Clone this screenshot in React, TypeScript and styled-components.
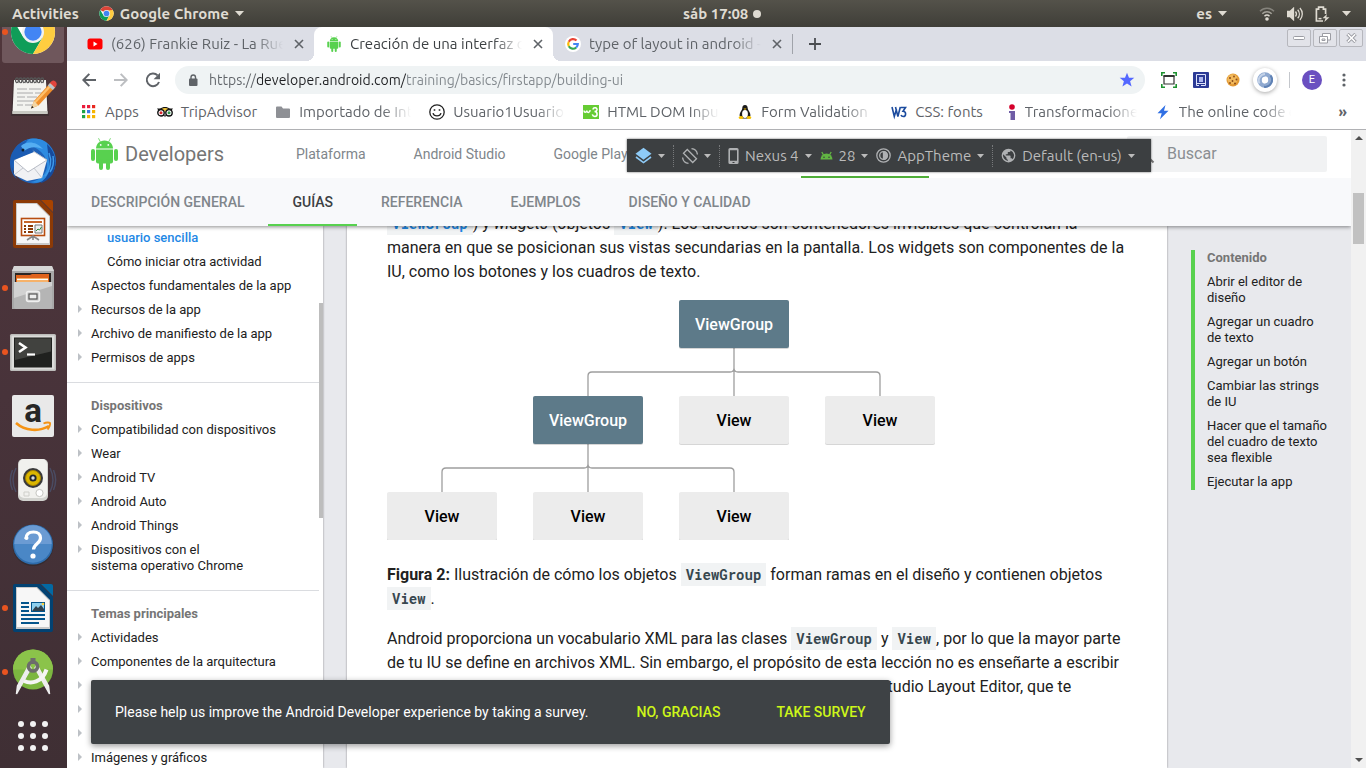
import React from "react";
import styled, { createGlobalStyle, css } from "styled-components";

const ui = `Ubuntu, "Noto Sans", "Open Sans", sans-serif`;
const body = `Roboto, "Liberation Sans", sans-serif`;
const mono = `"Roboto Mono", "DejaVu Sans Mono", monospace`;

const green = "#58d14f";

const GlobalStyle = createGlobalStyle`
  * { box-sizing: border-box; }
  html, body, #root { height: 100%; }
  body { margin: 0; overflow: hidden; font-family: ${body}; color: #212121; background: #fff; }
  a { color: inherit; text-decoration: none; }
  button { font: inherit; color: inherit; background: none; border: 0; padding: 0; cursor: pointer; }
  ul { list-style: none; margin: 0; padding: 0; }
  p { margin: 0; }
  svg { display: block; flex: none; }
`;

/* ---------- Desktop shell ---------- */

const Desktop = styled.div`
  height: 100vh;
  display: flex;
  flex-direction: column;
`;

const TopBar = styled.header`
  flex: none;
  height: 27px;
  display: flex;
  align-items: center;
  position: relative;
  z-index: 10;
  background: linear-gradient(#54524a, #3f3e38);
  color: #dfdbd2;
  font: bold 15px/20px ${ui};
`;

const TopBarStart = styled.div`
  flex: 0 0 50%;
  display: flex;
  align-items: center;
  gap: 20px;
  padding-left: 12px;
`;

const MenuButton = styled.button`
  display: flex;
  align-items: center;
  gap: 6px;
`;

const Clock = styled.button`
  display: flex;
  align-items: center;
  gap: 5px;
`;

const Tray = styled.div`
  margin-left: auto;
  display: flex;
  align-items: center;
  gap: 12px;
  padding-right: 15px;
  & > ${MenuButton}:first-child { margin-right: 20px; }
`;

const Workspace = styled.div`
  flex: 1;
  min-height: 0;
  display: flex;
`;

const Launcher = styled.nav`
  flex: 0 0 67px;
  overflow: hidden;
  background: linear-gradient(#50363b, #48333a 50%, #3f2f34);
`;

const LauncherList = styled.ul`
  margin-top: -27px;
`;

const LauncherItem = styled.li`
  height: 64px;
  padding: 1px 2px;
`;

const LauncherButton = styled.button<{ $open?: boolean; $focus?: boolean }>`
  position: relative;
  width: 62px;
  height: 62px;
  display: flex;
  align-items: center;
  justify-content: center;
  border-radius: 3px;
  ${(p) => p.$focus && css`background: #6f575c;`}
  ${(p) =>
    p.$open &&
    css`
      &::before {
        content: "";
        position: absolute;
        left: 0;
        top: 28px;
        width: 6px;
        height: 6px;
        border-radius: 50%;
        background: #e95420;
      }
    `}
`;

const Browser = styled.div`
  flex: 1;
  min-width: 0;
  display: flex;
  flex-direction: column;
`;

/* ---------- Browser chrome ---------- */

const TabStrip = styled.div`
  flex: none;
  height: 34px;
  display: flex;
  align-items: center;
  padding-left: 8px;
  background: #dcdee6;
  color: #5f6368;
  font: 15px/20px ${ui};
`;

const Tab = styled.div<{ $active?: boolean }>`
  flex: 0 1 239px;
  min-width: 0;
  height: 34px;
  display: flex;
  align-items: center;
  gap: 8px;
  padding: 0 7px 0 12px;
  position: relative;
  ${(p) =>
    p.$active &&
    css`
      background: #fff;
      color: #3c4043;
      border-radius: 8px 8px 0 0;
      &::before,
      &::after {
        content: "";
        position: absolute;
        bottom: 0;
        width: 8px;
        height: 8px;
      }
      &::before {
        left: -8px;
        background: radial-gradient(circle at 0 0, transparent 8px, #fff 8px);
      }
      &::after {
        right: -8px;
        background: radial-gradient(circle at 100% 0, transparent 8px, #fff 8px);
      }
    `}
`;

const fade = css`
  overflow: hidden;
  white-space: nowrap;
  mask-image: linear-gradient(to right, #000 calc(100% - 28px), transparent);
`;

const TabTitle = styled.button`
  flex: 1;
  min-width: 0;
  text-align: left;
  ${fade}
`;

const IconButton = styled.button<{ $size?: number }>`
  flex: none;
  width: ${(p) => p.$size ?? 32}px;
  height: ${(p) => p.$size ?? 32}px;
  display: flex;
  align-items: center;
  justify-content: center;
`;

const StripDivider = styled.span`
  width: 1px;
  height: 20px;
  margin-right: 6px;
  background: #a0a3aa;
`;

const WindowButtons = styled.div`
  margin: 0 3px 12px auto;
  display: flex;
  gap: 2px;
`;

const WindowButton = styled.button`
  width: 24px;
  height: 18px;
  display: flex;
  align-items: center;
  justify-content: center;
  border: 1px solid #b6b7bd;
  border-radius: 2px;
  background: #e2e3e9;
`;

const Toolbar = styled.div`
  flex: none;
  height: 37px;
  display: flex;
  align-items: center;
  padding: 0 6px;
  background: #fff;
`;

const Omnibox = styled.div`
  flex: 1;
  min-width: 0;
  height: 28px;
  margin: 0 8px 0 6px;
  padding: 0 10px 0 12px;
  display: flex;
  align-items: center;
  gap: 10px;
  border-radius: 14px;
  background: #eff3f4;
`;

const UrlInput = styled.input`
  flex: 1;
  min-width: 0;
  padding: 0;
  border: 0;
  outline: 0;
  font: 14px/20px ${ui};
  color: transparent;
  background: linear-gradient(to right, #5f6368 48px, #202124 48px 197px, #80868b 197px);
  background-clip: text;
  -webkit-background-clip: text;
`;

const ToolDivider = styled.span`
  width: 1px;
  height: 16px;
  margin: 0 12px 0 8px;
  background: #c4c7cc;
`;

const ExtensionHalo = styled.span`
  display: flex;
  padding: 4px;
  border-radius: 50%;
  box-shadow: 0 1px 4px rgba(0, 0, 0, 0.35);
`;

const Avatar = styled.button`
  width: 20px;
  height: 20px;
  margin-right: 6px;
  border-radius: 50%;
  background: #6a4fc0;
  color: #fff;
  font: 11px/20px ${body};
`;

const BookmarkBar = styled.nav`
  flex: none;
  height: 32px;
  display: flex;
  align-items: center;
  gap: 18px;
  padding: 0 19px 4px 14px;
  border-bottom: 1px solid #b0b1b4;
  background: #fff;
  color: #5f6368;
  font: 15px/20px ${ui};
`;

const Bookmark = styled.a`
  display: flex;
  align-items: center;
  gap: 8px;
`;

const BookmarkLabel = styled.span<{ $cut?: boolean }>`
  max-width: 112px;
  white-space: nowrap;
  ${(p) => p.$cut && fade}
  ${(p) => p.$cut && css`width: 112px;`}
`;

const MoreBookmarks = styled.button`
  margin-left: auto;
  font-weight: bold;
`;

/* ---------- Web page ---------- */

const Viewport = styled.div`
  flex: 1;
  min-height: 0;
  display: flex;
`;

const Site = styled.div`
  flex: 1;
  min-width: 0;
  position: relative;
  display: flex;
  flex-direction: column;
  overflow: hidden;
  background: #e8e9ed;
`;

const SiteHeader = styled.header`
  flex: none;
  position: relative;
  z-index: 2;
  background: #fff;
  box-shadow: 0 1px 4px rgba(0, 0, 0, 0.45);
`;

const HeaderRow = styled.div`
  height: 48px;
  display: flex;
  align-items: center;
  padding: 0 24px;
`;

const Brand = styled.a`
  display: flex;
  align-items: center;
  gap: 7px;
  margin-right: 48px;
  color: #757575;
  font: 20px/32px ${body};
`;

const SiteTab = styled.a<{ $active?: boolean }>`
  height: 48px;
  padding: 0 24px;
  border-bottom: 2px solid ${(p) => (p.$active ? "#4fae38" : "transparent")};
  font-size: 14px;
  line-height: 48px;
  white-space: nowrap;
  color: #80868b;
`;

const Search = styled.label`
  flex: 0 0 200px;
  min-width: 0;
  height: 36px;
  margin: 0 0 0 auto;
  padding: 0 12px 0 8px;
  display: flex;
  align-items: center;
  gap: 12px;
  border-radius: 2px;
  background: #f1f2f3;
`;

const SearchInput = styled.input`
  flex: 1;
  min-width: 0;
  padding: 0;
  border: 0;
  outline: 0;
  background: none;
  font: 16px/24px ${body};
  &::placeholder { color: #8a8e92; }
`;

const SectionTabs = styled.nav`
  height: 48px;
  display: flex;
  background: #f8f9fb;
`;

const SectionTab = styled.a<{ $active?: boolean }>`
  height: 48px;
  padding: 0 24px;
  border-bottom: 2px solid ${(p) => (p.$active ? green : "transparent")};
  font-size: 14px;
  font-weight: 500;
  line-height: 48px;
  white-space: nowrap;
  color: ${(p) => (p.$active ? "#3c4043" : "#80868b")};
`;

const Columns = styled.div`
  flex: 1;
  min-height: 0;
  display: flex;
`;

const SideNav = styled.nav`
  flex: 0 0 256px;
  position: relative;
  overflow: hidden;
  background: #fff;
  box-shadow: 0 0 2px rgba(0, 0, 0, 0.4);
  font-size: 13px;
  line-height: 16px;
`;

const NavScroll = styled.div`
  margin: -12px 4px 0 0;
`;

const NavSection = styled.section`
  padding-bottom: 12px;
  & + & {
    padding-top: 11px;
    border-top: 1px solid #dadce0;
  }
`;

const NavHeading = styled.h2`
  margin: 0;
  padding: 4px 24px;
  font: bold 13px/16px ${body};
  color: #757575;
`;

const NavLink = styled.a<{ $nested?: boolean; $current?: boolean; $folder?: boolean }>`
  display: block;
  position: relative;
  padding: 4px 24px 4px ${(p) => (p.$nested ? 40 : 24)}px;
  ${(p) => p.$current && css`color: #1e88e5; font-weight: 500; padding-top: 0;`}
  ${(p) =>
    p.$folder &&
    css`
      &::before {
        content: "";
        position: absolute;
        left: 11px;
        top: 7px;
        border: 4px solid transparent;
        border-right: 0;
        border-left-color: #bdc1c6;
      }
    `}
`;

const NavThumb = styled.span`
  position: absolute;
  right: 0;
  top: 77px;
  width: 4px;
  height: 215px;
  background: #bdbdbd;
`;

const Article = styled.main`
  flex: 1;
  min-width: 0;
  margin-left: 24px;
  padding: 0 40px;
  overflow: hidden;
  background: #fff;
  box-shadow: 0 0 2px rgba(0, 0, 0, 0.4);
  font-size: 16px;
  line-height: 24px;
  & > p { margin-bottom: 16px; }
  & > p:first-child { margin-top: -14px; }
`;

const Code = styled.code<{ $link?: boolean }>`
  padding: 2px 5px;
  background: #f1f3f4;
  color: ${(p) => (p.$link ? "#1e88e5" : "#37474f")};
  font: bold 14px/16px ${mono};
`;

const Figure = styled.figure`
  margin: 0 0 16px;
`;

const Caption = styled.figcaption`
  padding-top: 23px;
`;

const TocColumn = styled.aside`
  flex: 0 0 184px;
  padding: 24px;
`;

const Toc = styled.nav`
  padding-left: 12px;
  border-left: 4px solid ${green};
  font-size: 13px;
  line-height: 16px;
`;

const TocHeading = styled.h2`
  margin: 0;
  font: bold 13px/16px ${body};
  color: #757575;
`;

const TocItem = styled.li`
  margin-top: 8px;
`;

const Scrollbar = styled.div`
  flex: 0 0 15px;
  display: flex;
  flex-direction: column;
  align-items: center;
  padding: 6px 0;
  background: #f1f1f1;
`;

const ScrollThumb = styled.span`
  width: 11px;
  height: 51px;
  margin: 53px 0 auto;
  background: #c1c1c1;
`;

const Snackbar = styled.div`
  position: absolute;
  z-index: 3;
  left: 24px;
  bottom: 24px;
  height: 64px;
  padding: 0 24px;
  display: flex;
  align-items: center;
  gap: 56px;
  border-radius: 2px;
  background: #3e4245;
  color: #fff;
  box-shadow: 0 2px 6px rgba(0, 0, 0, 0.4);
  font-size: 14px;
  white-space: nowrap;
`;

const SnackText = styled.p`
  margin-right: -8px;
`;

const SnackAction = styled.button`
  color: #cdf619;
  font-weight: 500;
`;

/* ---------- Layout-editor toolbar over the page ---------- */

const EditorBar = styled.div`
  position: absolute;
  z-index: 4;
  top: 9px;
  left: 560px;
  width: 524px;
  height: 33px;
  padding: 0 8px;
  display: flex;
  align-items: center;
  gap: 8px;
  background: #3c3f41;
  box-shadow: 0 0 2px rgba(0, 0, 0, 0.6);
  color: #bbb;
  font: 15px/20px ${ui};
  white-space: nowrap;
`;

const EditorMenu = styled.button`
  display: flex;
  align-items: center;
  gap: 6px;
`;

const DottedRule = styled.span`
  height: 22px;
  border-left: 1px dotted #77797b;
`;

/* ---------- Icons ---------- */

const Caret = ({ w = 9, h = 5, fill = "currentColor" }) => (
  <svg width={w} height={h} viewBox="0 0 10 6" preserveAspectRatio="none"><path d="M0 0h10L5 6z" fill={fill} /></svg>
);

const ChromeIcon = ({ size = 16 }) => (
  <svg width={size} height={size} viewBox="0 0 48 48">
    <circle cx="24" cy="24" r="23" fill="#fff" />
    <path d="M24 24 4.1 12.5A23 23 0 0 1 43.9 12.5H24z" fill="#db4437" />
    <path d="M4.1 12.5A23 23 0 0 0 24 47l10-17.2L24 24l-10 5.8z" fill="#0f9d58" />
    <path d="M43.9 12.5A23 23 0 0 1 24 47l10-17.2L34 18l-10-5.5z" fill="#ffcd40" />
    <path d="M24 12.5h19.9L24 14z" fill="#db4437" />
    <circle cx="24" cy="24" r="11.5" fill="#f1f1f1" />
    <circle cx="24" cy="24" r="9" fill="#4285f4" />
  </svg>
);

const AndroidRobot = ({ w = 27, h = 32 }) => (
  <svg width={w} height={h} viewBox="0 0 27 32" fill={green}>
    <path d="M5 10.500C5 6 8.500 2.400 13.500 2.400S22 6 22 10.500z" />
    <path d="M9.300 3.800 7.700.6M17.700 3.800 19.300.6" stroke={green} strokeWidth=".8" strokeLinecap="round" />
    <circle cx="9.700" cy="6.900" r=".9" fill="#fff" />
    <circle cx="17.300" cy="6.900" r=".9" fill="#fff" />
    <path d="M5 11.500h17v12a2 2 0 0 1-2 2H7a2 2 0 0 1-2-2z" />
    <rect x="0" y="11" width="4" height="12" rx="2" />
    <rect x="23" y="11" width="4" height="12" rx="2" />
    <rect x="8" y="21" width="4" height="11" rx="2" />
    <rect x="15" y="21" width="4" height="11" rx="2" />
  </svg>
);

const YouTubeIcon = () => (
  <svg width="16" height="16" viewBox="0 0 16 16"><rect x=".5" y="2.500" width="15" height="11" rx="2.500" fill="#f00" /><path d="M6.500 5.600v4.800L10.500 8z" fill="#fff" /></svg>
);

const GoogleIcon = () => (
  <svg width="16" height="16" viewBox="0 0 16 16" fill="none" strokeWidth="2.200">
    <circle cx="8" cy="8" r="8" fill="#fff" />
    <path d="M11.500 4.600A4.800 4.800 0 0 0 3.800 5.700" stroke="#ea4335" />
    <path d="M3.800 5.700a4.800 4.800 0 0 0 0 4.600" stroke="#fbbc05" />
    <path d="M3.800 10.300a4.800 4.800 0 0 0 7.400 1.200" stroke="#34a853" />
    <path d="M11.200 11.500A4.800 4.800 0 0 0 12.800 8H8.200" stroke="#4285f4" />
  </svg>
);

const CloseIcon = () => (
  <svg width="10" height="10" viewBox="0 0 10 10" stroke="#5f6368" strokeWidth="1.600"><path d="m1 1 8 8M9 1 1 9" /></svg>
);

const PlusIcon = () => (
  <svg width="12" height="12" viewBox="0 0 12 12" stroke="#4a4d51" strokeWidth="1.800"><path d="M6 0v12M0 6h12" /></svg>
);

const ArrowIcon = ({ back = false }) => (
  <svg width="14" height="14" viewBox="0 0 14 14" fill="none" stroke={back ? "#5f6368" : "#bcbec1"} strokeWidth="2">
    {back ? <path d="M14 7H1.600M7.300.9 1.300 7l6 6.100" /> : <path d="M0 7h12.400M6.700.9l6 6.100-6 6.100" />}
  </svg>
);

const ReloadIcon = () => (
  <svg width="16" height="16" viewBox="0 0 16 16"><path d="M12.600 3.400A6.300 6.300 0 1 0 14 10" fill="none" stroke="#5f6368" strokeWidth="2" /><path d="M15 .8v6.400H8.600z" fill="#5f6368" /></svg>
);

const LockIcon = () => (
  <svg width="12" height="12" viewBox="0 0 12 12"><rect x="2" y="4.500" width="8.500" height="7.500" rx="1" fill="#5f6368" /><path d="M4 5V3.200a2.200 2.200 0 0 1 4.500 0V5" fill="none" stroke="#5f6368" strokeWidth="1.400" /></svg>
);

const StarIcon = () => (
  <svg width="16" height="16" viewBox="0 0 16 16"><path d="m8 .8 2 5h5.300l-4.200 3.400 1.500 5.300L8 11.400l-4.600 3.100 1.500-5.300L.7 5.800H6z" fill="#5468ff" /></svg>
);

const ScreenshotIcon = () => (
  <svg width="16" height="16" viewBox="0 0 16 16" fill="none"><path d="M.8 4V.8H4M12 .8h3.200V4M15.200 12v3.200H12M4 15.200H.8V12" stroke="#1e9331" strokeWidth="1.600" /><path d="M3 4h10v8H3z" stroke="#333" strokeWidth="1.200" /><path d="M2.500 4h11" stroke="#333" strokeWidth="2" /></svg>
);

const BookIcon = () => (
  <svg width="16" height="16" viewBox="0 0 16 16"><rect width="16" height="16" rx="1" fill="#2c3a96" /><path d="M3.500 2.500h9v9h-9z" fill="none" stroke="#dfe4fa" /><path d="M6 5h4v5H6z" fill="#aeb8ee" /><path d="M3.500 11v2.500H6M8 13.500h4.500V11" fill="none" stroke="#dfe4fa" /></svg>
);

const CookieIcon = () => (
  <svg width="14" height="14" viewBox="0 0 14 14"><circle cx="7" cy="7" r="6.500" fill="#e39a35" /><circle cx="6.500" cy="6.200" r="5" fill="#f2b95b" /><g fill="#8a4a18"><circle cx="4" cy="5" r="1" /><circle cx="8" cy="3.500" r=".9" /><circle cx="10.500" cy="6.500" r="1" /><circle cx="6.500" cy="8" r=".9" /><circle cx="9" cy="10.500" r="1" /><circle cx="4" cy="10" r=".9" /></g></svg>
);

const SwirlIcon = () => (
  <svg width="16" height="16" viewBox="0 0 16 16" fill="none"><circle cx="8" cy="8" r="5.500" stroke="#8fa9d0" strokeWidth="4.600" /><path d="M13.500 3.500A7 7 0 0 1 7 14.800" stroke="#5f82b5" strokeWidth="2" /><path d="M2.500 11.500A6.500 6.500 0 0 1 8 2" stroke="#c3d2e8" strokeWidth="2" /><ellipse cx="8" cy="8" rx="2.600" ry="3.600" fill="#fff" transform="rotate(20 8 8)" /></svg>
);

const DotsIcon = () => (
  <svg width="4" height="14" viewBox="0 0 4 14" fill="#5f6368"><circle cx="2" cy="2" r="1.600" /><circle cx="2" cy="7" r="1.600" /><circle cx="2" cy="12" r="1.600" /></svg>
);

const AppsIcon = () => (
  <svg width="16" height="16" viewBox="0 0 16 16">
    {["#ea1d3c", "#ea1d3c", "#e8281f", "#1ea446", "#3b78e7", "#f5b400", "#1ea446", "#f5b400", "#f5b400"].map((c, i) => (
      <rect key={i} x={1 + (i % 3) * 5} y={1 + Math.floor(i / 3) * 5} width="3.200" height="3.200" fill={c} />
    ))}
  </svg>
);

const TripIcon = () => (
  <svg width="16" height="16" viewBox="0 0 16 16"><path d="M0 4.500h3C6 2.400 10 2.400 13 4.500h3l-1.500 2H1.500z" fill="#111" /><path d="M4.500 5c2-1.200 5-1.200 7 0L8 8z" fill="#f3c63a" /><circle cx="4" cy="8.800" r="3.200" fill="#fff" stroke="#111" strokeWidth="1.400" /><circle cx="12" cy="8.800" r="3.200" fill="#fff" stroke="#111" strokeWidth="1.400" /><circle cx="4" cy="8.800" r="1.500" fill="#d9262d" /><circle cx="12" cy="8.800" r="1.500" fill="#2f9a4a" /><path d="m6.800 11.300 1.200 2 1.200-2z" fill="#111" /></svg>
);

const FolderIcon = () => (
  <svg width="16" height="16" viewBox="0 0 16 16"><path d="M1 3.500a1 1 0 0 1 1-1h4.500l1.500 2h6a1 1 0 0 1 1 1V13a1 1 0 0 1-1 1H2a1 1 0 0 1-1-1z" fill="#8e9095" /></svg>
);

const SmileIcon = () => (
  <svg width="16" height="16" viewBox="0 0 16 16" fill="none" stroke="#222" strokeWidth="1.300"><circle cx="8" cy="8" r="7.200" /><path d="M4 9.200c1 3.600 7 3.600 8 0" /><path d="M5.500 5.200v1.600M10.500 5.200v1.600" strokeWidth="1.600" /></svg>
);

const W3SchoolsIcon = () => (
  <svg width="16" height="16" viewBox="0 0 16 16"><rect y="1" width="16" height="14" fill="#66cc33" /><path d="M1 6.500c0 2.400 2.600 2.400 2.800 0 .2 2.600 3 2.600 3.400-.3 M9.800 5.500c.8-2.800 4.600-2 4.200.3-.2 1.200-1.300 1.700-2.500 1.700 3.400 0 3.400 4.800.3 4.900-1.500 0-2.200-.8-2.500-2" fill="none" stroke="#fff" strokeWidth="1.500" /></svg>
);

const TuxIcon = () => (
  <svg width="16" height="16" viewBox="0 0 16 16"><path d="M8 1c2 0 2.700 1.500 2.700 3.300 0 1.800 2.800 4 2.800 7.200L11 14.500H5L2.500 11.500c0-3.200 2.800-5.400 2.800-7.200C5.300 2.500 6 1 8 1z" fill="#1b1b1b" /><ellipse cx="8" cy="10" rx="2.900" ry="4" fill="#fff" /><path d="M6.500 4.500 8 6l1.500-1.500z" fill="#f5c000" /><ellipse cx="4" cy="13.500" rx="2.400" ry="1.500" fill="#f5c000" /><ellipse cx="12" cy="13.500" rx="2.400" ry="1.500" fill="#f5c000" /></svg>
);

const W3CIcon = () => (
  <svg width="16" height="16" viewBox="0 0 16 16" fill="none" stroke="#1b4b9e" strokeWidth="1.600"><path d="m1 3 2.300 9.500L5.500 5M4.500 3l2.400 9.500L9.300 3" /><path d="M9.500 3.500h5L12 7.200c3.600.2 3.200 5.200.3 5.300-1.300 0-2-.7-2.300-1.500" /></svg>
);

const InfoIIcon = () => (
  <svg width="16" height="16" viewBox="0 0 16 16"><circle cx="11" cy="3" r="2.800" fill="#d5002b" /><path d="M8 7h6v9H9.500v-7H8z" fill="#6f5ca6" /></svg>
);

const BoltIcon = () => (
  <svg width="16" height="16" viewBox="0 0 16 16"><path d="M10.500 1 2.500 9.300h4.200L5 15.200l8.500-8.400H9z" fill="#2f6fe4" /></svg>
);

const MagnifierIcon = () => (
  <svg width="20" height="20" viewBox="0 0 20 20" fill="none" stroke="#757575" strokeWidth="2"><circle cx="8" cy="8" r="5.500" /><path d="m12 12 6.500 6.500" /></svg>
);

const WifiIcon = () => (
  <svg width="16" height="14" viewBox="0 0 16 14" fill="none" strokeWidth="1.500"><path d="M1 4.200c4-4 10-4 14 0" stroke="#85837c" /><path d="M3.300 6.800c2.700-2.700 6.700-2.700 9.400 0" stroke="#a5a29a" /><path d="M5.500 9.200c1.500-1.400 3.500-1.400 5 0" stroke="#dfdbd2" /><circle cx="8" cy="12" r="1.800" fill="#dfdbd2" /></svg>
);

const VolumeIcon = () => (
  <svg width="16" height="14" viewBox="0 0 16 14" fill="none" stroke="#dfdbd2" strokeWidth="1.300"><path d="M.5 4.500H3L6.500 1.200v11.600L3 9.500H.5z" fill="#dfdbd2" /><path d="M8.500 4.500c1.200 1.500 1.200 3.500 0 5M10.700 2.700c2.200 2.500 2.200 6.100 0 8.600M12.900 1c3.200 3.500 3.200 8.500 0 12" /></svg>
);

const BatteryIcon = () => (
  <svg width="15" height="16" viewBox="0 0 15 16" fill="none" stroke="#dfdbd2" strokeWidth="1.700"><path d="M8 15H1.400V3.200h2.200V1.200h4.800v2h2.200V8" /><path d="M3.500 12.600h3" strokeWidth="1.500" /><path d="m12 8-4.500 4.200h3L9.300 16l5.200-4.700h-3.200z" fill="#dfdbd2" stroke="none" /></svg>
);

const LayersIcon = () => (
  <svg width="17" height="17" viewBox="0 0 17 17"><path d="m8.500.8 8 6-8 6-8-6z" fill="#8ecbf7" /><path d="m1 10 7.500 5.600L16 10" fill="none" stroke="#8ecbf7" strokeWidth="1.600" /></svg>
);

const RotateIcon = () => (
  <svg width="16" height="16" viewBox="0 0 16 16" fill="none" stroke="#afb1b3" strokeWidth="1.300"><path d="m5.300 1.500 9.200 9.200-3.800 3.800-9.200-9.200z" /><path d="M9.500.7c3 .3 5.500 2.600 5.900 5.800M6.500 15.300C3.500 15 1 12.700.6 9.500" /></svg>
);

const PhoneIcon = () => (
  <svg width="11" height="16" viewBox="0 0 11 16"><path d="M2 0h7a1.600 1.600 0 0 1 1.600 1.600v12.800A1.600 1.600 0 0 1 9 16H2A1.600 1.600 0 0 1 .4 14.400V1.600A1.600 1.600 0 0 1 2 0zM2 2.200v10.600h7V2.200zM4.500 14v1h2v-1z" fill="#afb1b3" fillRule="evenodd" /></svg>
);

const AndroidHead = () => (
  <svg width="13" height="9" viewBox="0 0 13 9"><path d="M.5 8.500a6 6 0 0 1 12 0z" fill="#62b543" /><path d="M3.500 4 1.800 1M9.500 4 11.200 1" stroke="#62b543" strokeWidth="1.300" /><circle cx="4" cy="6.200" r=".8" fill="#3c3f41" /><circle cx="9" cy="6.200" r=".8" fill="#3c3f41" /></svg>
);

const ThemeIcon = () => (
  <svg width="15" height="15" viewBox="0 0 15 15" fill="none" stroke="#afb1b3" strokeWidth="1.300"><circle cx="7.500" cy="7.500" r="6.700" /><circle cx="7.500" cy="7.500" r="3.800" /><path d="M7.500 3.700a3.800 3.800 0 0 1 0 7.600z" fill="#afb1b3" /></svg>
);

const GlobeIcon = () => (
  <svg width="15" height="15" viewBox="0 0 24 24"><path d="M12 1a11 11 0 1 0 0 22 11 11 0 0 0 0-22zm-1.100 19.700A8.800 8.800 0 0 1 3.500 10l5.200 5.300v1.100a2.200 2.200 0 0 0 2.200 2.200zm7.600-2.800a2.200 2.200 0 0 0-2.100-1.500h-1.100v-3.300a1.100 1.100 0 0 0-1.100-1.100H7.600V9.800h2.200c.6 0 1.100-.5 1.100-1.100V6.500h2.200a2.200 2.200 0 0 0 2.200-2.200v-.5a8.800 8.800 0 0 1 3.200 14.100z" fill="#afb1b3" /></svg>
);

const TriangleIcon = ({ up = false }) => (
  <svg width="8" height="4" viewBox="0 0 8 4"><path d={up ? "M0 4h8L4 0z" : "M0 0h8L4 4z"} fill="#505050" /></svg>
);

const GeditIcon = () => (
  <svg width="48" height="48" viewBox="0 0 48 48">
    <path d="M4 8h34l2 36H2z" fill="#222" opacity=".35" />
    <path d="M5 8h32l1.500 33.500h-35z" fill="#f3f3ef" />
    <path d="m3.500 39 35 0 .2 3H3.300z" fill="#c9c9c3" />
    <g stroke="#aaa" strokeWidth="1"><path d="M8 17h10M20 17h12M8 21h16M26 21h7M8 25h8M18 25h10M8 29h18M8 33h6M16 33h8" /></g>
    <g stroke="#555" strokeWidth="1.300" fill="none">{[0, 1, 2, 3, 4, 5, 6, 7].map((i) => <path key={i} d={`M${8 + i * 3.600} 11c-2-1-2-5 0-5s1.500 3 .6 5`} />)}</g>
    <path d="M22 36.500 25 29 41.500 10.500l5 4.500L29.500 33.500z" fill="#ef8f2c" />
    <path d="m24.500 30.500 17.500-19 1.800 1.500L26 32z" fill="#ffc069" />
    <path d="m22 36.500 3-7.500 4.500 4.500z" fill="#f3d6a4" /><path d="m22 36.500 1-2.700 1.700 1.600z" fill="#222" />
    <path d="m38.800 13.500 2.200-2.500 5 4.500-2.200 2.500z" fill="#b9c4cc" />
    <path d="M41 11c1.500-2.500 3.500-3.300 5.500-1.500s1.500 4-.5 6z" fill="#e0443e" />
  </svg>
);

const ThunderbirdIcon = () => (
  <svg width="48" height="48" viewBox="0 0 48 48">
    <circle cx="24.500" cy="25" r="22.500" fill="#1f62b8" />
    <path d="M12 8C17 1 33 0 40 9c8 9 9 22 1 31-5 6-15 8-20 6 12-2 18-10 17-19C36 16 26 9 12 8z" fill="#2d8be0" />
    <path d="M38 8c9 8 11 21 5 31-3 4-7 7-12 8 8-6 11-13 9-22z" fill="#164a9c" />
    <path d="M40 17c3 7 2 16-4 23M44 20c1 6 0 12-3 16" fill="none" stroke="#3f9bea" strokeWidth="1.500" />
    <path d="M5 24 24 15l14 9-5 18-15 3L5 39z" fill="#f0f1f4" />
    <path d="M5 24 19 36l19-12L24 15z" fill="#fff" stroke="#b8bcc6" />
    <path d="M5 39l9-7M33 42l-8-10" stroke="#c4c8d0" fill="none" />
    <path d="M1 26C1 15 9 7 20 3c-3 3-5 5-5 8 5 0 8 2 10 5L5 24C2 29 3 36 8 43 3 39 1 33 1 26z" fill="#1b5cb3" />
    <path d="M12 10c5-5 15-5 22 3-8-3-14-2-19 2z" fill="#55aef2" />
    <circle cx="14" cy="14" r="1.500" fill="#123" />
  </svg>
);

const DocumentIcon = ({ dark, light, children }: { dark: string; light: string; children: React.ReactNode }) => (
  <svg width="48" height="48" viewBox="0 0 48 48">
    <path d="M6 0h25l13 13v33a2 2 0 0 1-2 2H6a2 2 0 0 1-2-2V2a2 2 0 0 1 2-2z" fill={dark} />
    <path d="M32 0h10a2 2 0 0 1 2 2v10z" fill={light} />
    <path d="M7 3h21l13 13v29H7z" fill="#c9c9c9" /><path d="M8 4h19.500L40 16.500V43H8z" fill="#f7f7f7" />
    {children}
  </svg>
);

const ImpressIcon = () => (
  <DocumentIcon dark="#8c3a06" light="#a84300">
    <rect x="12.500" y="18.500" width="23" height="17" fill="#fff" stroke="#b84d10" strokeWidth="1.600" />
    <path d="M15 22h18" stroke="#c8662b" strokeWidth="2" />
    <path d="M15 26h2M15 29h2M15 32h2M19 26h5M19 29h5M19 32h5" stroke="#8c3a06" strokeWidth="1.800" />
    <path d="M26 25h7v8h-7z" fill="#eee" stroke="#777" /><path d="m27 31 2-2 1.500 1 2-3" fill="none" stroke="#2b8a3e" />
    <path d="m18 40 6-4 6 4M24 36v4" fill="none" stroke="#888" strokeWidth="1.600" />
  </DocumentIcon>
);

const WriterIcon = () => (
  <DocumentIcon dark="#024272" light="#0369a3">
    <path d="M12 19h8M12 23h8M12 27h8M12 31h24M12 35h24M12 39h18" stroke="#04558c" strokeWidth="2" />
    <rect x="22.500" y="18.500" width="13" height="9" fill="#8fd0ee" stroke="#04558c" /><path d="m23 27 4-5 2 2 3-3 3 4v2z" fill="#32424d" /><circle cx="34" cy="20" r="1.300" fill="#ffd23d" />
  </DocumentIcon>
);

const FilesIcon = () => (
  <svg width="48" height="48" viewBox="0 0 48 48">
    <path d="M5 2h38l2 5v38H3V7z" fill="#a8a8a8" /><path d="M5 2h38l2 5H3z" fill="#d6d6d6" />
    <path d="M6 9h36v10H6z" fill="#2c2522" /><path d="M7 11h14l2-1h17v9H7z" fill="#e0631c" /><path d="M8 14h31v5H8z" fill="#f6b26b" /><path d="M8 15.500h31" stroke="#fff" strokeWidth="1" />
    <path d="M5 18h38v25a2 2 0 0 1-2 2H7a2 2 0 0 1-2-2z" fill="#b5b5b5" /><path d="M5 18h38v4L5 34z" fill="#d2d2d2" />
    <rect x="17.500" y="27.500" width="13" height="10" rx="2" fill="#cfcfcf" stroke="#efefef" strokeWidth="1.500" /><rect x="20" y="30" width="8" height="5" fill="#eee" stroke="#555" strokeWidth="1.200" />
  </svg>
);

const TerminalIcon = () => (
  <svg width="48" height="48" viewBox="0 0 48 48">
    <rect x="1" y="6" width="46" height="37" rx="1.500" fill="#bdbdbb" /><rect x="2.500" y="7.500" width="43" height="34" fill="#dcdcda" />
    <rect x="5" y="9.500" width="38" height="30" fill="#20211f" /><path d="M6 10.500h36v13L6 32z" fill="#41423f" />
    <path d="m10 15 6.500 4.500L10 24" fill="none" stroke="#fff" strokeWidth="2.600" /><path d="M18 26.500h8" stroke="#fff" strokeWidth="2.200" />
  </svg>
);

const AmazonIcon = () => (
  <svg width="48" height="48" viewBox="0 0 48 48">
    <rect x="3" y="3" width="42" height="42" rx="2" fill="#e9e9e9" />
    <text x="24" y="30" textAnchor="middle" fontFamily={body} fontSize="33" fontWeight="bold" fill="#262626">a</text>
    <path d="M7 31c9 8 23 9 33 3" fill="none" stroke="#f59314" strokeWidth="2.600" /><path d="M34.500 31.500c3-1.500 6-1 6.500-.5.500 1-.5 4.500-2.500 6.500" fill="none" stroke="#f59314" strokeWidth="1.800" />
  </svg>
);

const RhythmboxIcon = () => (
  <svg width="48" height="48" viewBox="0 0 48 48">
    <g fill="none" stroke="#4c5674" strokeWidth="1.500" opacity=".7"><path d="M7 12c-4 8-4 16 0 24M3.500 14c-3 7-3 13 0 20M41 12c4 8 4 16 0 24M44.500 14c3 7 3 13 0 20" /></g>
    <rect x="9" y="3" width="30" height="42" rx="5" fill="#d2d3cf" /><rect x="10" y="3" width="28" height="39" rx="5" fill="#f1f1ee" />
    <circle cx="24" cy="22" r="10" fill="#3a3a3a" /><circle cx="24" cy="22" r="7.500" fill="#dbb600" stroke="#a98600" /><circle cx="24" cy="22" r="3.600" fill="#23272c" /><circle cx="24" cy="22" r="1.700" fill="#d8dde0" />
    <circle cx="30.500" cy="37" r="3.600" fill="#fff" stroke="#c6c6c2" /><path d="M15 36h5v4h-5z" fill="none" stroke="#cfcfca" />
  </svg>
);

const HelpIcon = () => (
  <svg width="48" height="48" viewBox="0 0 48 48">
    <circle cx="24" cy="25.500" r="20.500" fill="#222" opacity=".4" /><circle cx="24" cy="24.500" r="20" fill="#2e6cab" /><circle cx="24" cy="24" r="18.700" fill="#4a87c6" /><path d="M5.300 24a18.700 18.700 0 0 1 37.400 0z" fill="#6b9bd3" />
    <path d="M17 19c0-5 3-7 7.500-7s7 2.500 7 6c0 5.500-7 6-7 11.500" fill="none" stroke="#fff" strokeWidth="3.200" /><circle cx="17.500" cy="18" r="2" fill="#fff" /><circle cx="24" cy="36" r="2.600" fill="#fff" />
  </svg>
);

const StudioIcon = () => (
  <svg width="48" height="48" viewBox="0 0 48 48">
    <circle cx="24" cy="21.500" r="20" fill="#7cb740" /><path d="M4 21.500a20 20 0 0 1 40 0z" fill="#8bc34a" />
    <path d="M22 20 7.500 46l1-8L20 17zM26 20l14.500 26-1-8L28 17z" fill="#eee" stroke="#eee" strokeWidth="1.500" />
    <path d="M15 33c7 3 18 2 22.500-11.500" fill="none" stroke="#f5f5f5" strokeWidth="4" />
    <rect x="21.500" y="10" width="5" height="6" fill="#6c6c6c" /><circle cx="24" cy="18.500" r="4.500" fill="none" stroke="#6c6c6c" strokeWidth="3.600" />
  </svg>
);

const GridIcon = () => (
  <svg width="48" height="48" viewBox="0 0 48 48" fill="#f2f2f2">
    {[0, 1, 2, 3, 4, 5, 6, 7, 8].map((i) => <circle key={i} cx={12 + (i % 3) * 12} cy={12 + Math.floor(i / 3) * 12} r="3" />)}
  </svg>
);

/* ---------- Data ---------- */

const launcherItems = [
  { name: "Google Chrome", icon: <ChromeIcon size={46} />, open: true, focus: true },
  { name: "Text Editor", icon: <GeditIcon /> },
  { name: "Thunderbird", icon: <ThunderbirdIcon /> },
  { name: "LibreOffice Impress", icon: <ImpressIcon /> },
  { name: "Files", icon: <FilesIcon />, open: true },
  { name: "Terminal", icon: <TerminalIcon />, open: true },
  { name: "Amazon", icon: <AmazonIcon /> },
  { name: "Rhythmbox", icon: <RhythmboxIcon /> },
  { name: "Help", icon: <HelpIcon /> },
  { name: "LibreOffice Writer", icon: <WriterIcon />, open: true },
  { name: "Android Studio", icon: <StudioIcon />, open: true },
  { name: "Show Applications", icon: <GridIcon /> },
];

const tabs = [
  { title: "(626) Frankie Ruiz - La Rueda", icon: <YouTubeIcon /> },
  { title: "Creación de una interfaz de usuario", icon: <AndroidRobot w={16} h={16} />, active: true },
  { title: "type of layout in android - Google", icon: <GoogleIcon /> },
];

const bookmarks = [
  { label: "Apps", icon: <AppsIcon /> },
  { label: "TripAdvisor", icon: <TripIcon /> },
  { label: "Importado de Internet", icon: <FolderIcon />, cut: true },
  { label: "Usuario1Usuario1", icon: <SmileIcon />, cut: true },
  { label: "HTML DOM Input", icon: <W3SchoolsIcon />, cut: true },
  { label: "Form Validation", icon: <TuxIcon />, cut: true },
  { label: "CSS: fonts", icon: <W3CIcon /> },
  { label: "Transformaciones", icon: <InfoIIcon />, cut: true },
  { label: "The online code editor", icon: <BoltIcon />, cut: true },
];

type NavItem = { label: React.ReactNode; nested?: boolean; current?: boolean; folder?: boolean };

const navSections: { heading?: string; items: NavItem[] }[] = [
  {
    items: [
      { label: <>Cómo crear una interfaz de<br />usuario sencilla</>, nested: true, current: true },
      { label: "Cómo iniciar otra actividad", nested: true },
      { label: "Aspectos fundamentales de la app" },
      { label: "Recursos de la app", folder: true },
      { label: "Archivo de manifiesto de la app", folder: true },
      { label: "Permisos de apps", folder: true },
    ],
  },
  {
    heading: "Dispositivos",
    items: [
      { label: "Compatibilidad con dispositivos", folder: true },
      { label: "Wear", folder: true },
      { label: "Android TV", folder: true },
      { label: "Android Auto", folder: true },
      { label: "Android Things", folder: true },
      { label: <>Dispositivos con el<br />sistema operativo Chrome</>, folder: true },
    ],
  },
  {
    heading: "Temas principales",
    items: [
      { label: "Actividades", folder: true },
      { label: "Componentes de la arquitectura", folder: true },
      { label: "Intents y filtros de intents", folder: true },
      { label: "Interfaz de usuario", folder: true },
      { label: "Animaciones y transiciones", folder: true },
      { label: "Imágenes y gráficos", folder: true },
    ],
  },
];

const tocItems = [
  "Abrir el editor de diseño",
  "Agregar un cuadro de texto",
  "Agregar un botón",
  "Cambiar las strings de IU",
  "Hacer que el tamaño del cuadro de texto sea flexible",
  "Ejecutar la app",
];

const nodes = [
  { x: 292, y: 0, group: true },
  { x: 146, y: 96, group: true },
  { x: 292, y: 96 },
  { x: 438, y: 96 },
  { x: 0, y: 192 },
  { x: 146, y: 192 },
  { x: 292, y: 192 },
];

const Tree = () => (
  <svg width="549" height="240" viewBox="0 0 549 240" role="img" aria-label="Árbol de ViewGroup y View">
    <g fill="none" stroke="#9e9e9e" strokeWidth="1.300">
      <path d="M347 48v48M201 96V76q0-4 4-4h138q4 0 4-4 0 4 4 4h138q4 0 4 4v20" />
      <path d="M201 144v48M55 192v-20q0-4 4-4h138q4 0 4-4 0 4 4 4h138q4 0 4 4v20" />
    </g>
    {nodes.map((n, i) => (
      <g key={i}>
        <rect x={n.x} y={n.y + 1} width="110" height="48" rx="2" fill="#000" opacity=".16" />
        <rect x={n.x} y={n.y} width="110" height="48" rx="2" fill={n.group ? "#5d7a89" : "#ececec"} />
        <text x={n.x + 55} y={n.y + 30} textAnchor="middle" fontFamily={body} fontSize="16" fontWeight="500" fill={n.group ? "#fff" : "#000"}>
          {n.group ? "ViewGroup" : "View"}
        </text>
      </g>
    ))}
  </svg>
);

export default function App() {
  return (
    <Desktop>
      <GlobalStyle />
      <TopBar>
        <TopBarStart>
          <button>Activities</button>
          <MenuButton><ChromeIcon size={15} />Google Chrome<Caret /></MenuButton>
        </TopBarStart>
        <Clock>sáb 17:08<svg width="8" height="8" viewBox="0 0 8 8"><circle cx="4" cy="4" r="4" fill="#dfdbd2" /></svg></Clock>
        <Tray>
          <MenuButton>es<Caret /></MenuButton>
          <WifiIcon />
          <VolumeIcon />
          <BatteryIcon />
          <Caret />
        </Tray>
      </TopBar>

      <Workspace>
        <Launcher aria-label="Launcher">
          <LauncherList>
            {launcherItems.map((it) => (
              <LauncherItem key={it.name}>
                <LauncherButton aria-label={it.name} $open={it.open} $focus={it.focus}>{it.icon}</LauncherButton>
              </LauncherItem>
            ))}
          </LauncherList>
        </Launcher>

        <Browser>
          <TabStrip>
            {tabs.map((t) => (
              <Tab key={t.title} $active={t.active}>
                {t.icon}
                <TabTitle>{t.title}</TabTitle>
                <IconButton $size={16} aria-label="Close tab"><CloseIcon /></IconButton>
              </Tab>
            ))}
            <StripDivider />
            <IconButton aria-label="New tab"><PlusIcon /></IconButton>
            <WindowButtons>
              <WindowButton aria-label="Minimize"><svg width="12" height="4"><rect x=".5" y=".5" width="11" height="3" rx="1" fill="#fff" stroke="#9b9ca3" /></svg></WindowButton>
              <WindowButton aria-label="Restore"><svg width="12" height="11" viewBox="0 0 12 11" fill="#fff" stroke="#9b9ca3"><path d="M3.500.5h8v6.500h-8z" /><path d="M.5 3.500h8V10h-8z" /><path d="M3 6h3v1.500H3z" /></svg></WindowButton>
              <WindowButton aria-label="Close"><svg width="11" height="10" viewBox="0 0 11 10"><path d="m1.500 1 8 8m0-8-8 8" stroke="#9b9ca3" strokeWidth="3.400" /><path d="m1.800 1.300 7.400 7.400m0-7.400L1.800 8.700" stroke="#fff" strokeWidth="1.600" /></svg></WindowButton>
            </WindowButtons>
          </TabStrip>

          <Toolbar>
            <IconButton aria-label="Back"><ArrowIcon back /></IconButton>
            <IconButton aria-label="Forward"><ArrowIcon /></IconButton>
            <IconButton aria-label="Reload"><ReloadIcon /></IconButton>
            <Omnibox>
              <LockIcon />
              <UrlInput aria-label="Address" defaultValue="https://developer.android.com/training/basics/firstapp/building-ui" />
              <StarIcon />
            </Omnibox>
            <IconButton aria-label="Screenshot"><ScreenshotIcon /></IconButton>
            <IconButton aria-label="Dictionary"><BookIcon /></IconButton>
            <IconButton aria-label="Cookies"><CookieIcon /></IconButton>
            <IconButton aria-label="Formatter"><ExtensionHalo><SwirlIcon /></ExtensionHalo></IconButton>
            <ToolDivider />
            <Avatar>E</Avatar>
            <IconButton aria-label="Menu"><DotsIcon /></IconButton>
          </Toolbar>

          <BookmarkBar aria-label="Bookmarks">
            {bookmarks.map((b) => (
              <Bookmark key={b.label} href="#">
                {b.icon}
                <BookmarkLabel $cut={b.cut}>{b.label}</BookmarkLabel>
              </Bookmark>
            ))}
            <MoreBookmarks>»</MoreBookmarks>
          </BookmarkBar>

          <Viewport>
            <Site>
              <SiteHeader>
                <HeaderRow>
                  <Brand href="#"><AndroidRobot />Developers</Brand>
                  <SiteTab href="#">Plataforma</SiteTab>
                  <SiteTab href="#">Android Studio</SiteTab>
                  <SiteTab href="#">Google Play</SiteTab>
                  <SiteTab href="#">Android Jetpack</SiteTab>
                  <SiteTab href="#" $active>Documentos</SiteTab>
                  <Search>
                    <MagnifierIcon />
                    <SearchInput placeholder="Buscar" aria-label="Buscar" />
                  </Search>
                </HeaderRow>
                <SectionTabs>
                  <SectionTab href="#">DESCRIPCIÓN GENERAL</SectionTab>
                  <SectionTab href="#" $active>GUÍAS</SectionTab>
                  <SectionTab href="#">REFERENCIA</SectionTab>
                  <SectionTab href="#">EJEMPLOS</SectionTab>
                  <SectionTab href="#">DISEÑO Y CALIDAD</SectionTab>
                </SectionTabs>
              </SiteHeader>

              <Columns>
                <SideNav>
                  <NavScroll>
                    {navSections.map((s, i) => (
                      <NavSection key={i}>
                        {s.heading && <NavHeading>{s.heading}</NavHeading>}
                        <ul>
                          {s.items.map((it, j) => (
                            <li key={j}>
                              <NavLink href="#" $nested={it.nested} $current={it.current} $folder={it.folder}>{it.label}</NavLink>
                            </li>
                          ))}
                        </ul>
                      </NavSection>
                    ))}
                  </NavScroll>
                  <NavThumb />
                </SideNav>

                <Article>
                  <p>
                    <Code $link>ViewGroup</Code>) y <i>widgets</i> (objetos <Code $link>View</Code>). Los diseños son contenedores invisibles que controlan la
                    manera en que se posicionan sus vistas secundarias en la pantalla. Los widgets son componentes de la
                    IU, como los botones y los cuadros de texto.
                  </p>
                  <Figure>
                    <Tree />
                    <Caption>
                      <b>Figura 2:</b> Ilustración de cómo los objetos <Code>ViewGroup</Code> forman ramas en el diseño y contienen objetos <Code>View</Code>.
                    </Caption>
                  </Figure>
                  <p>
                    Android proporciona un vocabulario XML para las clases <Code>ViewGroup</Code> y <Code>View</Code>, por lo que la mayor parte
                    de tu IU se define en archivos XML. Sin embargo, el propósito de esta lección no es enseñarte a escribir
                    código XML, sino a crear un diseño atractivo con el editor de Android Studio Layout Editor, que te
                  </p>
                </Article>

                <TocColumn>
                  <Toc>
                    <TocHeading>Contenido</TocHeading>
                    <ul>
                      {tocItems.map((t) => <TocItem key={t}><a href="#">{t}</a></TocItem>)}
                    </ul>
                  </Toc>
                </TocColumn>
              </Columns>

              <EditorBar>
                <EditorMenu aria-label="Design surface"><LayersIcon /><Caret w={7} h={4} /></EditorMenu>
                <DottedRule />
                <EditorMenu aria-label="Orientation"><RotateIcon /><Caret w={7} h={4} /></EditorMenu>
                <DottedRule />
                <EditorMenu><PhoneIcon />Nexus 4<Caret w={7} h={4} /></EditorMenu>
                <EditorMenu><AndroidHead />28<Caret w={7} h={4} /></EditorMenu>
                <EditorMenu><ThemeIcon />AppTheme<Caret w={7} h={4} /></EditorMenu>
                <DottedRule />
                <EditorMenu><GlobeIcon />Default (en-us)<Caret w={7} h={4} /></EditorMenu>
              </EditorBar>

              <Snackbar role="status">
                <SnackText>Please help us improve the Android Developer experience by taking a survey.</SnackText>
                <SnackAction>NO, GRACIAS</SnackAction>
                <SnackAction>TAKE SURVEY</SnackAction>
              </Snackbar>
            </Site>
            <Scrollbar aria-hidden="true">
              <TriangleIcon up />
              <ScrollThumb />
              <TriangleIcon />
            </Scrollbar>
          </Viewport>
        </Browser>
      </Workspace>
    </Desktop>
  );
}
